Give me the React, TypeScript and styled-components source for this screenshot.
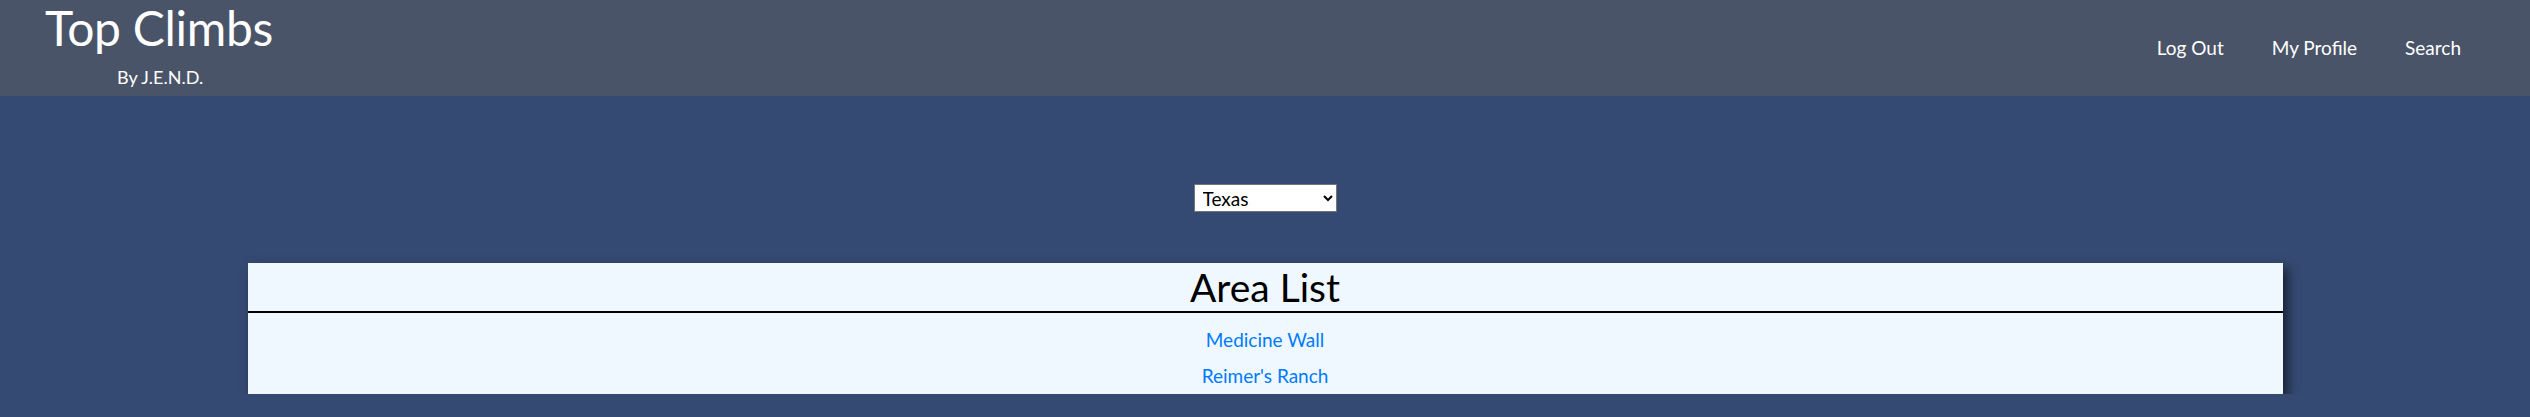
import React from "react";
import styled, { createGlobalStyle } from "styled-components";

const Global = createGlobalStyle`
  html, body { margin: 0; padding: 0; }
  body {
    background: #354a72;
    font-family: "Lato", "Open Sans", sans-serif;
  }
`;

const Header = styled.header`
  height: 96px;
  background: #4a5468;
  display: flex;
  justify-content: space-between;
  align-items: flex-start;
`;

const Brand = styled.div`
  display: flex;
  flex-direction: column;
  padding-left: 45px;
  color: #fff;
`;

const Title = styled.h1`
  margin: 0;
  font-weight: 400;
  font-size: 48px;
  line-height: 56px;
  letter-spacing: -0.3px;
`;

const Sub = styled.div`
  margin-top: 9px;
  padding-left: 72px;
  font-size: 18px;
  line-height: 24px;
`;

const Nav = styled.nav`
  display: flex;
  gap: 48px;
  padding: 34px 69px 0 0;
`;

const NavLink = styled.a`
  color: #fff;
  font-size: 19px;
  line-height: 28px;
  text-decoration: none;
`;

const Main = styled.main`
  display: flex;
  flex-direction: column;
  align-items: center;
  padding-top: 88px;
`;

const Select = styled.select`
  width: 143px;
  height: 28px;
  font-family: inherit;
  font-size: 19px;
  border: 1px solid #767676;
  background: #fff;
  color: #000;
  padding: 0 4px;
`;

const Card = styled.section`
  margin-top: 51px;
  width: 2035px;
  background: #eff7ff;
  box-shadow: 5px 5px 10px rgba(0, 0, 0, 0.55);
  text-align: center;
`;

const CardHead = styled.h2`
  margin: 0;
  height: 48px;
  border-bottom: 2px solid #000;
  font-weight: 400;
  font-size: 39px;
  line-height: 48px;
  color: #000;
`;

const List = styled.ul`
  list-style: none;
  margin: 0;
  padding: 9px 0 0;
`;

const Item = styled.li`
  font-size: 19px;
  line-height: 36px;
`;

const ItemLink = styled.a`
  color: #007bff;
  text-decoration: none;
`;

export default function App() {
  return (
    <>
      <Global />
      <Header>
        <Brand>
          <Title>Top Climbs</Title>
          <Sub>By J.E.N.D.</Sub>
        </Brand>
        <Nav>
          <NavLink href="#">Log Out</NavLink>
          <NavLink href="#">My Profile</NavLink>
          <NavLink href="#">Search</NavLink>
        </Nav>
      </Header>
      <Main>
        <Select defaultValue="Texas">
          <option>Texas</option>
          <option>Colorado</option>
          <option>California</option>
        </Select>
        <Card>
          <CardHead>Area List</CardHead>
          <List>
            <Item><ItemLink href="#">Medicine Wall</ItemLink></Item>
            <Item><ItemLink href="#">Reimer's Ranch</ItemLink></Item>
          </List>
        </Card>
      </Main>
    </>
  );
}
